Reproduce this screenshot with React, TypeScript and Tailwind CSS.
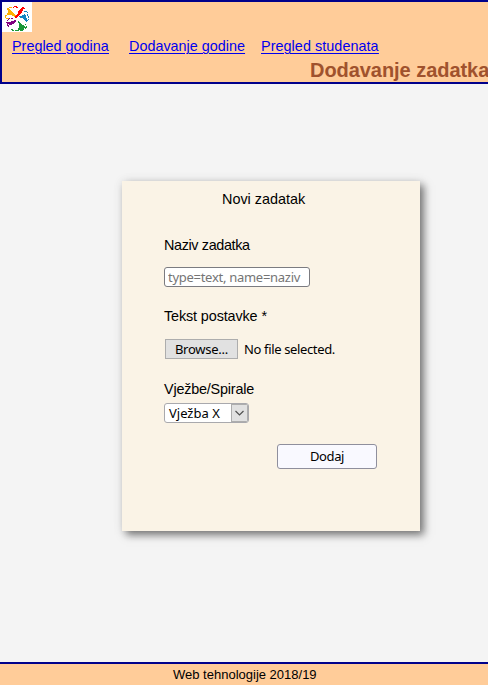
import React from "react";

function Logo() {
  return (
    <svg width="30" height="30" viewBox="0 0 30 30" className="block bg-white" fill="none" shapeRendering="crispEdges">
      <path d="M5 6L7 6L9 9L12 11L14 14L13 15L9 13L5 13L6 10Z" fill="#ffb000" />
      <path d="M20 5L22 6L20 10L16 14L14 17L13 15L16 11L17 8Z" fill="#f00" />
      <path d="M15 15L19 14L23 12L24 14L25 18L23 19L20 16Z" fill="#1285c0" />
      <path d="M4 20L8 20L13 18L14 19L11 22L8 23L5 22Z" fill="#800080" />
      <path d="M16 18L18 21L21 23L23 25L20 28L16 28L17 24Z" fill="#189838" />
      <path d="M7 6L10 5M5 13L3 14L4 16L7 17" stroke="#ffb000" />
      <path d="M11 6L13 4L16 6M20 5L23 7" stroke="#f00" />
      <path d="M22 9L25 10L26 14L26 18L23 20" stroke="#1285c0" strokeDasharray="4 1" />
      <path d="M5 19L7 17L11 16M5 22L7 25" stroke="#800080" strokeDasharray="4 1" />
      <path d="M9 27L12 29L16 28L19 29L23 27L25 24L23 22" stroke="#189838" strokeDasharray="4 1" />
    </svg>
  );
}

export default function App() {
  return (
    <div className="flex h-[685px] w-[488px] flex-col overflow-hidden bg-[#f4f4f4] font-['Liberation_Sans',Arial,sans-serif] text-black">
      <header className="h-[84px] shrink-0 overflow-hidden border-y-2 border-l-2 border-[#00008b] bg-[#ffcc99]">
        <Logo />
        <nav className="flex h-[24px] pl-[10px] pt-[4px] text-[14.4px] leading-[20px] text-[#0000ee] underline decoration-1 underline-offset-2">
          <a className="w-[117px] shrink-0">Pregled godina</a>
          <a className="w-[132px] shrink-0">Dodavanje godine</a>
          <a className="shrink-0 tracking-[0.05px]">Pregled studenata</a>
        </nav>
        <h1 className="ml-[308px] mt-[2px] whitespace-nowrap text-[20px] font-bold leading-[24px] tracking-[-0.05px] text-[#a0522d]">Dodavanje zadatka</h1>
      </header>
      <main className="flex-1 pl-[122px] pt-[97px]">
        <form className="flex h-[350px] w-[298px] flex-col bg-[#faf3e6] pl-[42px] pt-[9px] text-[14.4px] leading-[18px] shadow-[4px_4px_8px_0_rgba(0,0,0,0.5),0_0_10px_0_rgba(0,0,0,0.08)]">
          <p className="pl-[58px]">Novi zadatak</p>
          <label className="mt-[28px] tracking-[-0.36px]">Naziv zadatka</label>
          <input
            placeholder="type=text, name=naziv"
            className="mt-[13px] h-[20px] w-[146px] shrink-0 rounded-[3px] border border-[#7b7b80] bg-white px-[3px] font-['Noto_Sans',sans-serif] text-[13px] leading-[18px] tracking-[-0.28px] outline-none placeholder:text-[#757575]"
          />
          <label className="mt-[20px] tracking-[-0.12px]">Tekst postavke *</label>
          <div className="ml-px mt-[14px] flex h-[20px] items-center font-['Noto_Sans',sans-serif] text-[13px] tracking-[-0.36px]">
            <button type="button" className="h-[20px] w-[73px] border border-[#adadad] bg-[#e1e1e1] leading-[18px] tracking-[-0.25px]">Browse...</button>
            <span className="ml-[6px]">No file selected.</span>
          </div>
          <label className="mt-[21px] tracking-[-0.2px]">Vježbe/Spirale</label>
          <div className="mt-[5px] flex h-[20px] w-[85px] overflow-hidden rounded-[3px] border border-[#a9a9ad] bg-white font-['Noto_Sans',sans-serif] text-[13px] leading-[18px]">
            <span className="w-[66px] pl-[4px]">Vježba X</span>
            <span className="flex w-[17px] items-center justify-center border border-[#adadad] bg-[#e1e1e1]">
              <svg width="9" height="6" viewBox="0 0 9 6" fill="none" stroke="#505050" strokeWidth="1.2"><path d="M.5 1L4.5 5L8.5 1" /></svg>
            </span>
          </div>
          <button type="button" className="ml-[113px] mt-[21px] h-[25px] w-[100px] rounded-[3px] border border-[#8f8f9d] bg-[#f9f9ff] font-['Noto_Sans',sans-serif] text-[13px] leading-[23px] tracking-[-0.4px]">Dodaj</button>
        </form>
      </main>
      <footer className="h-[23px] shrink-0 border-t-2 border-[#00008b] bg-[#ffcc99] pl-[173px] text-[13px] leading-[21px]">Web tehnologije 2018/19</footer>
    </div>
  );
}
